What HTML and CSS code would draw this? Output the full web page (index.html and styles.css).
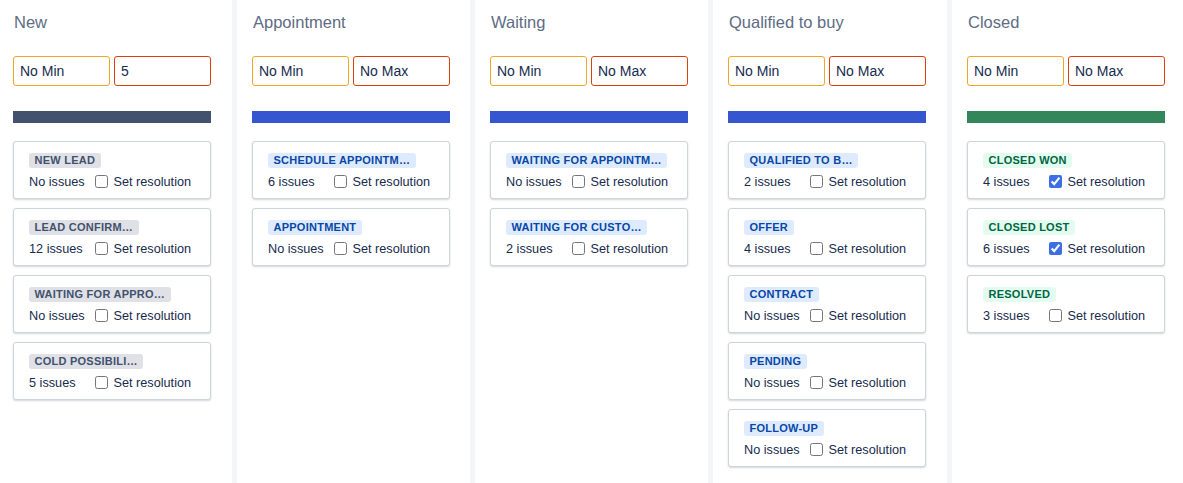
FILE: index.html
```html
<!DOCTYPE html>
<html lang="en">
<head>
<meta charset="utf-8">
<title>Board</title>
<link rel="stylesheet" href="styles.css">
</head>
<body>
<div class="board">
  <section class="column">
    <h2 class="col-title">New</h2>
    <div class="limits"><input class="limit min" value="No Min"><input class="limit max" value="5"></div>
    <div class="bar bar-gray"></div>
    <div class="cards">
      <div class="card"><span class="lozenge gray">NEW LEAD</span><div class="row"><span class="count">No issues</span><label class="res"><input type="checkbox"><span>Set resolution</span></label></div></div>
      <div class="card"><span class="lozenge gray">LEAD CONFIRM…</span><div class="row"><span class="count">12 issues</span><label class="res"><input type="checkbox"><span>Set resolution</span></label></div></div>
      <div class="card"><span class="lozenge gray">WAITING FOR APPRO…</span><div class="row"><span class="count">No issues</span><label class="res"><input type="checkbox"><span>Set resolution</span></label></div></div>
      <div class="card"><span class="lozenge gray">COLD POSSIBILI…</span><div class="row"><span class="count">5 issues</span><label class="res"><input type="checkbox"><span>Set resolution</span></label></div></div>
    </div>
  </section>
  <section class="column">
    <h2 class="col-title">Appointment</h2>
    <div class="limits"><input class="limit min" value="No Min"><input class="limit max" value="No Max"></div>
    <div class="bar bar-blue"></div>
    <div class="cards">
      <div class="card"><span class="lozenge blue">SCHEDULE APPOINTM…</span><div class="row"><span class="count">6 issues</span><label class="res"><input type="checkbox"><span>Set resolution</span></label></div></div>
      <div class="card"><span class="lozenge blue">APPOINTMENT</span><div class="row"><span class="count">No issues</span><label class="res"><input type="checkbox"><span>Set resolution</span></label></div></div>
    </div>
  </section>
  <section class="column">
    <h2 class="col-title">Waiting</h2>
    <div class="limits"><input class="limit min" value="No Min"><input class="limit max" value="No Max"></div>
    <div class="bar bar-blue"></div>
    <div class="cards">
      <div class="card"><span class="lozenge blue">WAITING FOR APPOINTM…</span><div class="row"><span class="count">No issues</span><label class="res"><input type="checkbox"><span>Set resolution</span></label></div></div>
      <div class="card"><span class="lozenge blue">WAITING FOR CUSTO…</span><div class="row"><span class="count">2 issues</span><label class="res"><input type="checkbox"><span>Set resolution</span></label></div></div>
    </div>
  </section>
  <section class="column">
    <h2 class="col-title">Qualified to buy</h2>
    <div class="limits"><input class="limit min" value="No Min"><input class="limit max" value="No Max"></div>
    <div class="bar bar-blue"></div>
    <div class="cards">
      <div class="card"><span class="lozenge blue">QUALIFIED TO B…</span><div class="row"><span class="count">2 issues</span><label class="res"><input type="checkbox"><span>Set resolution</span></label></div></div>
      <div class="card"><span class="lozenge blue">OFFER</span><div class="row"><span class="count">4 issues</span><label class="res"><input type="checkbox"><span>Set resolution</span></label></div></div>
      <div class="card"><span class="lozenge blue">CONTRACT</span><div class="row"><span class="count">No issues</span><label class="res"><input type="checkbox"><span>Set resolution</span></label></div></div>
      <div class="card"><span class="lozenge blue">PENDING</span><div class="row"><span class="count">No issues</span><label class="res"><input type="checkbox"><span>Set resolution</span></label></div></div>
      <div class="card"><span class="lozenge blue">FOLLOW-UP</span><div class="row"><span class="count">No issues</span><label class="res"><input type="checkbox"><span>Set resolution</span></label></div></div>
    </div>
  </section>
  <section class="column">
    <h2 class="col-title">Closed</h2>
    <div class="limits"><input class="limit min" value="No Min"><input class="limit max" value="No Max"></div>
    <div class="bar bar-green"></div>
    <div class="cards">
      <div class="card"><span class="lozenge green">CLOSED WON</span><div class="row"><span class="count">4 issues</span><label class="res"><input type="checkbox" checked><span>Set resolution</span></label></div></div>
      <div class="card"><span class="lozenge green">CLOSED LOST</span><div class="row"><span class="count">6 issues</span><label class="res"><input type="checkbox" checked><span>Set resolution</span></label></div></div>
      <div class="card"><span class="lozenge green">RESOLVED</span><div class="row"><span class="count">3 issues</span><label class="res"><input type="checkbox"><span>Set resolution</span></label></div></div>
    </div>
  </section>
</div>
</body>
</html>
```
FILE: styles.css
```css
html, body {
  margin: 0;
  padding: 0;
  overflow: hidden;
  background: #f4f5f7;
  font-family: "Liberation Sans", Arial, sans-serif;
  color: #172b4d;
}

.board {
  display: grid;
  grid-template-columns: 234px 233px 233px 234px 233px;
  column-gap: 5px;
  margin-left: -2px;
  min-height: 100vh;
}

.column {
  background: #ffffff;
  padding: 11.8px 0 0 15px;
  min-height: 100vh;
  box-sizing: border-box;
}

.col-title {
  margin: 0;
  padding-left: 1px;
  font-size: 16.5px;
  line-height: 20px;
  font-weight: normal;
  color: #5e6c84;
}

.limits {
  display: flex;
  gap: 4px;
  width: 198px;
  margin-top: 24.2px;
}

.limit {
  box-sizing: border-box;
  width: 97px;
  height: 30px;
  margin: 0;
  padding: 0 6px;
  border: 1px solid;
  border-radius: 3px;
  font-family: "Liberation Sans", Arial, sans-serif;
  font-size: 14px;
  color: #172b4d;
  background: #fff;
  outline: none;
}

.limit.min { border-color: #f2a625; }
.limit.max { border-color: #d9420f; }

.bar {
  width: 198px;
  height: 12px;
  margin-top: 25px;
}

.bar-gray { background: #42526e; }
.bar-blue { background: #3656d0; }
.bar-green { background: #33855a; }

.cards {
  display: flex;
  flex-direction: column;
  gap: 9px;
  width: 198px;
  margin-top: 18px;
}

.card {
  box-sizing: border-box;
  height: 58px;
  padding: 11px 15px 6px;
  border: 1px solid #cfd3da;
  border-radius: 3px;
  background: #fff;
  box-shadow: 0 1px 2px rgba(9, 30, 66, 0.18);
  display: flex;
  flex-direction: column;
  align-items: flex-start;
}

.lozenge {
  display: inline-block;
  height: 15px;
  line-height: 15px;
  padding: 0 5.5px;
  border-radius: 3px;
  font-size: 11px;
  font-weight: bold;
  letter-spacing: 0.25px;
  white-space: nowrap;
}

.lozenge.gray { background: #dfe1e6; color: #42526e; }
.lozenge.blue { background: #deebff; color: #0747a6; }
.lozenge.green { background: #e3fcef; color: #006644; }

.row {
  display: flex;
  align-items: center;
  height: 20px;
  margin-top: 4px;
  font-size: 12.7px;
  white-space: nowrap;
}

.count {
  display: inline-block;
  width: 61.5px;
}

.res {
  display: flex;
  align-items: center;
}

.res input {
  width: 13px;
  height: 13px;
  margin: 0 3px 0 4px;
  accent-color: #3d6fe4;
}

.res span {
  margin-left: 3px;
}
```
